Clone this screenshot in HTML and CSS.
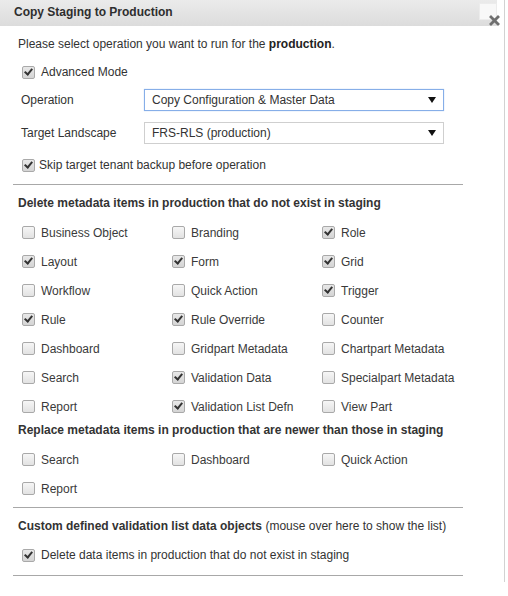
FILE: index.html
```html
<!DOCTYPE html>
<html>
<head>
<meta charset="utf-8">
<link rel="stylesheet" href="styles.css">
</head>
<body>
<div class="frame">
  <div class="titlebar">
    <span class="title">Copy Staging to Production</span>
    <span class="closebox"></span>
    <svg class="closex" width="11" height="11" viewBox="0 0 11 11"><path d="M2 2 L9 9 M9 2 L2 9" stroke="#6f6f6f" stroke-width="2.8" stroke-linecap="square"/></svg>
  </div>
  <div class="content">
    <div class="intro">Please select operation you want to run for the <b>production</b>.</div>
    <label class="row adv"><span class="cb on"></span>Advanced Mode</label>
    <div class="row op">
      <span class="flabel">Operation</span>
      <span class="select focus">Copy Configuration &amp; Master Data<svg class="arrow" width="8" height="6" viewBox="0 0 8 6"><polygon points="0,0 8,0 4,6" fill="#111"/></svg></span>
    </div>
    <div class="row target">
      <span class="flabel">Target Landscape</span>
      <span class="select">FRS-RLS (production)<svg class="arrow" width="8" height="6" viewBox="0 0 8 6"><polygon points="0,0 8,0 4,6" fill="#111"/></svg></span>
    </div>
    <label class="row skip"><span class="cb on"></span>Skip target tenant backup before operation</label>
    <div class="rule r1"></div>
    <div class="heading h1">Delete metadata items in production that do not exist in staging</div>
    <div class="grid">
      <label class="item"><span class="cb"></span>Business Object</label>
      <label class="item"><span class="cb"></span>Branding</label>
      <label class="item"><span class="cb on"></span>Role</label>
      <label class="item"><span class="cb on"></span>Layout</label>
      <label class="item"><span class="cb on"></span>Form</label>
      <label class="item"><span class="cb on"></span>Grid</label>
      <label class="item"><span class="cb"></span>Workflow</label>
      <label class="item"><span class="cb"></span>Quick Action</label>
      <label class="item"><span class="cb on"></span>Trigger</label>
      <label class="item"><span class="cb on"></span>Rule</label>
      <label class="item"><span class="cb on"></span>Rule Override</label>
      <label class="item"><span class="cb"></span>Counter</label>
      <label class="item"><span class="cb"></span>Dashboard</label>
      <label class="item"><span class="cb"></span>Gridpart Metadata</label>
      <label class="item"><span class="cb"></span>Chartpart Metadata</label>
      <label class="item"><span class="cb"></span>Search</label>
      <label class="item"><span class="cb on"></span>Validation Data</label>
      <label class="item"><span class="cb"></span>Specialpart Metadata</label>
      <label class="item"><span class="cb"></span>Report</label>
      <label class="item"><span class="cb on"></span>Validation List Defn</label>
      <label class="item"><span class="cb"></span>View Part</label>
    </div>
    <div class="heading h2">Replace metadata items in production that are newer than those in staging</div>
    <div class="grid">
      <label class="item"><span class="cb"></span>Search</label>
      <label class="item"><span class="cb"></span>Dashboard</label>
      <label class="item"><span class="cb"></span>Quick Action</label>
      <label class="item"><span class="cb"></span>Report</label>
    </div>
    <div class="rule r2"></div>
    <div class="heading h3"><b>Custom defined validation list data objects</b> <span class="note">(mouse over here to show the list)</span></div>
    <label class="row del"><span class="cb on"></span>Delete data items in production that do not exist in staging</label>
    <div class="rule r3"></div>
  </div>
</div>
</body>
</html>
```

FILE: styles.css
```css
html, body {
  margin: 0;
  padding: 0;
  background: #fff;
}
body {
  font-family: "Liberation Sans", Arial, sans-serif;
  font-size: 12px;
  color: #333;
}
.frame {
  width: 504px;
  height: 582px;
  border-right: 1px solid #d2d2d2;
  position: relative;
}
.titlebar {
  width: 497px;
  height: 26px;
  background: linear-gradient(#ebebeb, #dcdcdc);
  display: flex;
  align-items: center;
  position: relative;
}
.title {
  font-weight: bold;
  padding-left: 14px;
  color: #2e2e2e;
  margin-top: -2px;
}
.closebox {
  position: absolute;
  left: 479px;
  top: 3px;
  width: 16px;
  height: 15px;
  background: #f8f8f8;
  border: 1px solid #ececec;
}
.closex {
  position: absolute;
  left: 489px;
  top: 15px;
}
.content {
  padding-left: 18px;
}
.intro {
  line-height: 18px;
  margin-top: 9px;
  margin-bottom: 5px;
}
.intro b {
  color: #222;
}
.row {
  display: flex;
  align-items: center;
}
.adv {
  height: 28px;
  padding-left: 4px;
}
.adv .cb, .del .cb {
  margin-right: 6px;
}
.op {
  height: 28px;
}
.target {
  height: 38px;
}
.skip {
  height: 26px;
  padding-left: 4px;
}
.skip .cb {
  margin-right: 4px;
}
.flabel {
  width: 123px;
  padding-left: 3px;
}
.select {
  box-sizing: border-box;
  width: 300px;
  height: 22px;
  border: 1px solid #cfcfcf;
  display: flex;
  align-items: center;
  padding-left: 7px;
  position: relative;
  color: #333;
}
.select.focus {
  border-color: #86aee8;
  box-shadow: 0 0 1px #a9c6f0;
}
.arrow {
  position: absolute;
  right: 7px;
  top: 7px;
}
.rule {
  width: 450px;
  height: 1px;
  background: #a8a8a8;
  margin-left: -5px;
}
.r1 {
  margin-top: 6px;
}
.heading {
  font-weight: bold;
  line-height: 18px;
  color: #333;
}
.h1 {
  padding-top: 9px;
  height: 24px;
}
.h2 {
  height: 24px;
}
.h3 {
  padding-top: 9px;
  height: 27px;
}
.note {
  font-weight: normal;
}
.r2 {
  margin-top: 4px;
}
.del {
  height: 22px;
  padding-left: 4px;
}
.r3 {
  margin-top: 9px;
}
.grid {
  display: grid;
  grid-template-columns: 150px 150px 150px;
  grid-auto-rows: 29px;
}
.item {
  display: flex;
  align-items: center;
  padding-left: 4px;
  color: #3a3a3a;
}
.item .cb {
  margin-right: 6px;
}
.cb {
  box-sizing: border-box;
  display: inline-block;
  width: 13px;
  height: 13px;
  border: 1px solid #a9a9a9;
  border-radius: 2px;
  background: linear-gradient(#f6f6f6, #e2e2e2);
  position: relative;
  flex: none;
}
.cb.on {
  background: linear-gradient(#e8e8e8, #d4d4d4);
}
.cb.on::after {
  content: "";
  position: absolute;
  left: 3px;
  top: 0px;
  width: 3px;
  height: 6px;
  border-right: 2px solid #333;
  border-bottom: 2px solid #333;
  transform: rotate(40deg);
}
```
